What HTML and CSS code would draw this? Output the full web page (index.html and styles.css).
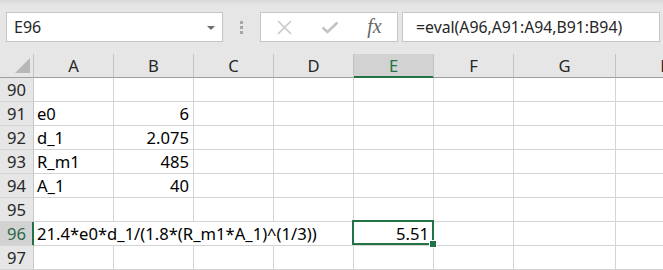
FILE: index.html
```html
<!DOCTYPE html>
<html lang="en">
<head>
    <meta charset="UTF-8">
    <title>Sheet</title>
    <link rel="stylesheet" href="styles.css">
</head>
<body>
    <div class="toolbar">
        <div class="name-box">
            <span>E96</span>
            <span class="drop-arrow"></span>
        </div>
        <div class="grip">
            <span></span><span></span><span></span>
        </div>
        <div class="fx-buttons">
            <div class="fx-btn">
                <svg width="15" height="15" viewBox="0 0 15 15"><path d="M1 1 L14 14 M14 1 L1 14" stroke="#c8c8c8" stroke-width="1.6" fill="none"/></svg>
            </div>
            <div class="fx-btn">
                <svg width="18" height="13" viewBox="0 0 18 13"><path d="M1.5 6.5 L6.5 11 L16.5 1.5" stroke="#c4c4c4" stroke-width="2.6" fill="none"/></svg>
            </div>
            <div class="fx-btn fx-label">fx</div>
        </div>
        <div class="formula-input">=eval(A96,A91:A94,B91:B94)</div>
    </div>

    <div class="sheet">
        <div class="row head-row">
            <div class="corner"><span class="corner-tri"></span></div>
            <div class="col-head">A</div>
            <div class="col-head">B</div>
            <div class="col-head">C</div>
            <div class="col-head">D</div>
            <div class="col-head active">E</div>
            <div class="col-head">F</div>
            <div class="col-head">G</div>
            <div class="col-head">H</div>
        </div>
        <div class="row">
            <div class="row-head">90</div>
            <div class="cell"></div><div class="cell"></div><div class="cell"></div><div class="cell"></div>
            <div class="cell"></div><div class="cell"></div><div class="cell"></div><div class="cell"></div>
        </div>
        <div class="row">
            <div class="row-head">91</div>
            <div class="cell">e0</div><div class="cell num">6</div><div class="cell"></div><div class="cell"></div>
            <div class="cell"></div><div class="cell"></div><div class="cell"></div><div class="cell"></div>
        </div>
        <div class="row">
            <div class="row-head">92</div>
            <div class="cell">d_1</div><div class="cell num">2.075</div><div class="cell"></div><div class="cell"></div>
            <div class="cell"></div><div class="cell"></div><div class="cell"></div><div class="cell"></div>
        </div>
        <div class="row">
            <div class="row-head">93</div>
            <div class="cell">R_m1</div><div class="cell num">485</div><div class="cell"></div><div class="cell"></div>
            <div class="cell"></div><div class="cell"></div><div class="cell"></div><div class="cell"></div>
        </div>
        <div class="row">
            <div class="row-head">94</div>
            <div class="cell">A_1</div><div class="cell num">40</div><div class="cell"></div><div class="cell"></div>
            <div class="cell"></div><div class="cell"></div><div class="cell"></div><div class="cell"></div>
        </div>
        <div class="row">
            <div class="row-head">95</div>
            <div class="cell"></div><div class="cell"></div><div class="cell"></div><div class="cell"></div>
            <div class="cell"></div><div class="cell"></div><div class="cell"></div><div class="cell"></div>
        </div>
        <div class="row">
            <div class="row-head active">96</div>
            <div class="cell span-4">21.4*e0*d_1/(1.8*(R_m1*A_1)^(1/3))</div>
            <div class="cell num selected">5.51<span class="fill-handle"></span></div>
            <div class="cell"></div><div class="cell"></div><div class="cell"></div>
        </div>
        <div class="row">
            <div class="row-head">97</div>
            <div class="cell"></div><div class="cell"></div><div class="cell"></div><div class="cell"></div>
            <div class="cell"></div><div class="cell"></div><div class="cell"></div><div class="cell"></div>
        </div>
    </div>
</body>
</html>
```

FILE: styles.css
```css
body {
    margin: 0;
    width: 663px;
    height: 270px;
    overflow: hidden;
    font-family: "Noto Sans", "Open Sans", sans-serif;
    background: white;
    color: #000;
}

/* formula bar */

.toolbar {
    height: 54px;
    box-sizing: border-box;
    padding: 12px 0 0 6px;
    display: flex;
    align-items: flex-start;
    background: linear-gradient(#d8d8d8, #e6e6e6 5px);
}

.name-box {
    width: 217px;
    height: 30px;
    box-sizing: border-box;
    border: 1px solid #c6c6c6;
    background: white;
    display: flex;
    align-items: center;
    justify-content: space-between;
    padding: 0 7px 0 7px;
    font-size: 16px;
    color: #262626;
}

.drop-arrow {
    width: 0;
    height: 0;
    border-left: 4px solid transparent;
    border-right: 4px solid transparent;
    border-top: 4px solid #6d6d6d;
    margin-top: 1px;
}

.grip {
    width: 37px;
    height: 30px;
    display: flex;
    flex-direction: column;
    align-items: center;
    justify-content: center;
    gap: 2px;
}

.grip span {
    width: 3px;
    height: 3px;
    background: #a6a6a6;
}

.fx-buttons {
    width: 138px;
    height: 30px;
    box-sizing: border-box;
    border: 1px solid #c6c6c6;
    background: white;
    display: flex;
    padding-left: 1px;
}

.fx-btn {
    width: 45px;
    display: flex;
    align-items: center;
    justify-content: center;
}

.fx-label {
    font-family: "Liberation Serif", serif;
    font-style: italic;
    font-size: 20px;
    color: #666;
    padding-bottom: 2px;
}

.formula-input {
    flex: 1;
    height: 30px;
    box-sizing: border-box;
    margin-left: 4px;
    margin-right: 3px;
    border: 1px solid #c6c6c6;
    background: white;
    padding-left: 13px;
    line-height: 28px;
    font-size: 15.8px;
    color: #262626;
    white-space: nowrap;
}

/* grid */

.row {
    display: grid;
    grid-template-columns: 34px repeat(6, 80px) 102px 102px;
    height: 24px;
}

.row > div {
    box-sizing: border-box;
    height: 24px;
    border-right: 1px solid #d4d4d4;
    border-bottom: 1px solid #d4d4d4;
    line-height: 23px;
    font-size: 16.6px;
    white-space: nowrap;
}

.head-row > div {
    background: #e6e6e6;
    border-right-color: #c3c3c3;
    border-bottom-color: #9e9e9e;
    text-align: center;
    color: #262626;
}

.head-row .active {
    background: #d2d2d2;
    color: #217346;
    border-bottom-color: #217346;
    box-shadow: inset 0 -1px 0 #217346;
}

.corner {
    display: flex;
    justify-content: flex-end;
    align-items: flex-end;
    padding: 0 3px 4px 0;
}

.corner-tri {
    width: 15px;
    height: 15px;
    background: #b7b7b7;
    clip-path: polygon(100% 0, 100% 100%, 0 100%);
}

.row-head {
    background: #e6e6e6;
    text-align: center;
    color: #262626;
    border-right-color: #c8c8c8 !important;
}

.row-head.active {
    background: #d2d2d2;
    color: #2b6a4a;
    border-right-color: #217346 !important;
    box-shadow: inset -1px 0 0 #217346;
}

.cell {
    padding: 0 3px;
}

.num {
    text-align: right;
    padding-right: 4px;
}

.span-4 {
    grid-column: span 4;
}

.selected {
    position: relative;
}

.selected::after {
    content: "";
    position: absolute;
    left: -2px;
    top: -2px;
    right: -1px;
    bottom: 0;
    border: 2px solid #217346;
}

.fill-handle {
    position: absolute;
    right: -4px;
    bottom: -3px;
    width: 6px;
    height: 6px;
    background: #217346;
    border: 1px solid white;
    z-index: 1;
}
```
